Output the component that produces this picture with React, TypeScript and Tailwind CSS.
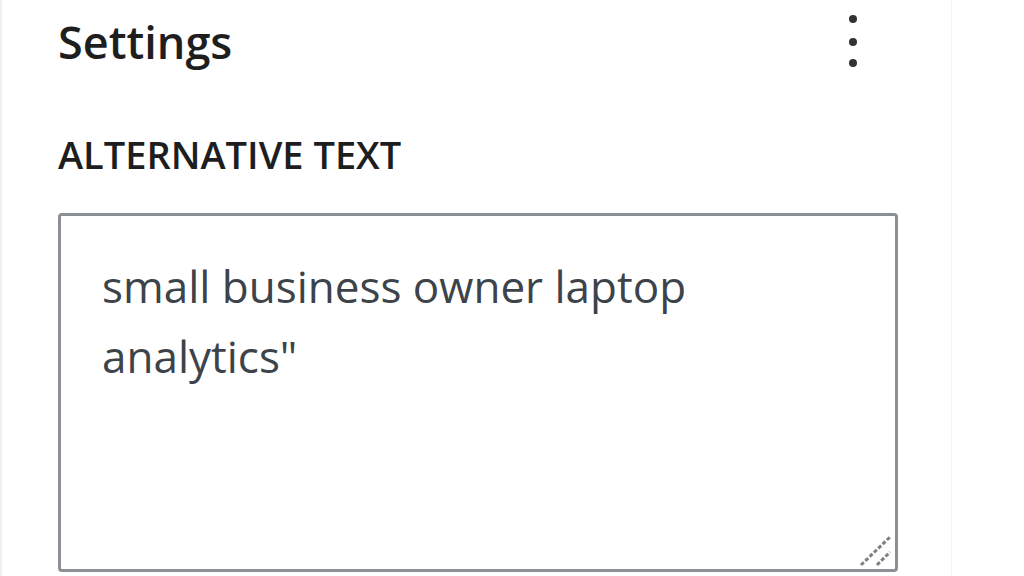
import React from 'react';

const MoreIcon = () => (
    <svg width="16" height="64" viewBox="0 0 16 64" className="block">
        <circle cx="8" cy="13" r="4" fill="#333" />
        <circle cx="8" cy="36" r="4" fill="#333" />
        <circle cx="8" cy="57" r="4" fill="#333" />
    </svg>
);

const ResizeGrip = () => (
    <svg width="36" height="36" viewBox="0 0 36 36" className="absolute right-[1px] bottom-[1px]">
        <line x1="3" y1="33" x2="32" y2="5" stroke="#808080" strokeWidth="3" strokeDasharray="4 2" />
        <line x1="19" y1="33" x2="32" y2="20" stroke="#808080" strokeWidth="3" strokeDasharray="4 2" />
    </svg>
);

export default function App() {
    return (
        <div className="w-[1024px] h-[576px] overflow-hidden bg-white flex font-['Open_Sans','Noto_Sans',sans-serif]">
            <div className="w-[952px] h-full border-l-2 border-[#f0f0f0] border-r border-r-[#f3f3f3] pl-[56px] pr-[56px] flex flex-col">
                <div className="flex items-center justify-between h-[84px] pr-[34px]">
                    <h2 className="text-[45px] font-semibold text-[#1e1e1e] leading-none -mt-[1px]">Settings</h2>
                    <div className="-mt-[8px]">
                        <MoreIcon />
                    </div>
                </div>
                <label className="mt-[51px] text-[38px] font-semibold uppercase text-[#1e1e1e] leading-none">
                    Alternative Text
                </label>
                <div className="relative mt-[40px] w-[840px] h-[359px] border-[3px] border-[#8c8f94] rounded-[4px] bg-white">
                    <div className="pl-[41px] pt-[35px] text-[44px] leading-[70px] text-[#3c434a]">
                        small business owner laptop
                        <br />
                        analytics"
                    </div>
                    <ResizeGrip />
                </div>
            </div>
            <div className="flex-1 bg-white" />
        </div>
    );
}
